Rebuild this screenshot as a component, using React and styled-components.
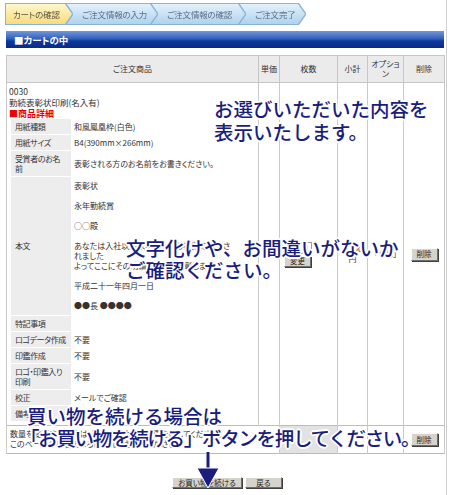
import styled, { createGlobalStyle } from "styled-components";

const GlobalStyle = createGlobalStyle`
  html, body { margin: 0; padding: 0; background: #fff; }
  body {
    font-family: "Noto Sans CJK JP", "Noto Sans", sans-serif;
    font-feature-settings: "palt";
    color: #333;
  }
`;

const Page = styled.div`
  position: relative;
  box-sizing: border-box;
  width: 447px;
  height: 495px;
  padding: 4px 2px 0 6px;
  border-right: 1px solid #d0d0d0;
  overflow: hidden;
`;

const Steps = styled.div`
  display: flex;
  height: 20px;
`;

const StepWrap = styled.div`
  position: relative;
  z-index: ${(p) => p.$z};
  margin-left: ${(p) => (p.$first ? 0 : -7)}px;
  filter: drop-shadow(1px 0 0 #8cb2d6) drop-shadow(-1px 0 0 #8cb2d6)
    drop-shadow(0 1px 0 #8cb2d6) drop-shadow(0 -1px 0 #8cb2d6);
`;

const Step = styled.div`
  box-sizing: border-box;
  width: ${(p) => p.$w}px;
  height: 20px;
  padding-left: ${(p) => (p.$first ? 7 : 17)}px;
  display: flex;
  align-items: center;
  font-size: 8.5px;
  letter-spacing: -0.2px;
  white-space: nowrap;
  color: ${(p) => (p.$active ? "#5b5442" : "#5a6f86")};
  background: ${(p) =>
    p.$active
      ? "linear-gradient(#fff7cc, #f8dc7c)"
      : "linear-gradient(#e3f1fb, #afd3ee)"};
  clip-path: polygon(0 0, calc(100% - 7px) 0, 100% 50%, calc(100% - 7px) 100%, 0 100%);
`;

const SectionBar = styled.div`
  margin-top: 7px;
  height: 17px;
  display: flex;
  align-items: center;
  padding-left: 8px;
  background: linear-gradient(#7398da, #3262bd 45%, #103899 60%, #0a2a86);
  color: #fff;
  font-size: 9.5px;
  font-weight: bold;
`;

const Cart = styled.table`
  margin-top: 7px;
  width: 438px;
  table-layout: fixed;
  border-collapse: collapse;
  border: 1px solid #b9b9b9;
  font-size: 8px;
  line-height: 10px;
`;

const Th = styled.th`
  height: 26px;
  padding: 0 1px;
  background: #ebebeb;
  font-weight: normal;
  color: #333;
  border: 1px solid #c6c6c6;
`;

const Td = styled.td`
  border-left: 1px solid #cacaca;
  border-right: 1px solid #cacaca;
  border-top: ${(p) => (p.$top ? "1px solid #bdbdbd" : "none")};
  padding: 2px;
  text-align: ${(p) => (p.$left ? "left" : "center")};
  vertical-align: ${(p) => (p.$valign ? p.$valign : "middle")};
  background: ${(p) => (p.$shade ? "#e2e2e2" : "#fff")};
`;

const ProductCell = styled(Td)`
  padding: 3px 2px 4px;
`;

const InfoLine = styled.div`
  line-height: 11px;
  color: ${(p) => (p.$red ? "#f00000" : "#333")};
  font-weight: ${(p) => (p.$red ? "bold" : "normal")};
  font-size: ${(p) => (p.$red ? "9px" : "8.5px")};
`;

const Detail = styled.div`
  display: grid;
  grid-template-columns: 60px 1fr;
  row-gap: 1px;
  margin: 0 2px;
`;

const Label = styled.div`
  background: #ededed;
  padding: 2.5px 2px 2.5px 4px;
  display: flex;
  align-items: center;
  white-space: pre-line;
  letter-spacing: -0.4px;
`;

const Value = styled.div`
  padding: ${(p) => (p.$tall ? "4px 3px" : "2.5px 3px")};
  display: flex;
  align-items: center;
`;

const Para = styled.div`
  margin-bottom: ${(p) => (p.$last ? 0 : 10)}px;
`;

const Btn = styled.button`
  box-sizing: border-box;
  height: ${(p) => (p.$h ? p.$h : 13)}px;
  min-width: ${(p) => (p.$min ? p.$min : 0)}px;
  padding: 0 5px;
  font-family: inherit;
  font-feature-settings: "palt";
  font-size: 7.5px;
  line-height: 1;
  color: #222;
  background: #d6d3cc;
  border: 1px solid;
  border-color: #fff #6f6f6f #6f6f6f #fff;
  box-shadow: 1px 1px 0 #404040;
`;

const QtyInput = styled.div`
  width: 24px;
  height: 10px;
  margin-bottom: 2px;
  border: 1px solid #999;
  font-size: 8px;
  line-height: 10px;
  text-align: right;
  padding-right: 2px;
`;

const QtyCell = styled(Td)`
  text-align: left;
  padding-left: 4px;
`;

const NoteText = styled.div`
  white-space: nowrap;
  overflow: hidden;
`;

const Actions = styled.div`
  margin-top: 23px;
  display: flex;
  justify-content: center;
  gap: 3px;
  padding-left: 4px;
`;

const Note = styled.div`
  position: absolute;
  left: ${(p) => p.$x}px;
  top: ${(p) => p.$y}px;
  font-family: "Noto Sans CJK JP", sans-serif;
  font-feature-settings: normal;
  font-size: 19.5px;
  font-weight: 500;
  line-height: ${(p) => p.$lh || 23}px;
  letter-spacing: ${(p) => p.$ls || 0}px;
  color: #1a1d7c;
  white-space: nowrap;
  text-shadow: -1px -1px 0 #fff, 1px -1px 0 #fff, -1px 1px 0 #fff,
    1px 1px 0 #fff, 0 -2px 0 #fff, 0 2px 0 #fff, -2px 0 0 #fff, 2px 0 0 #fff;
`;

const Arrow = styled.svg`
  position: absolute;
  left: 196px;
  top: 450px;
`;

const steps = [
  { t: "カートの確認", w: 66 },
  { t: "ご注文情報の入力", w: 92 },
  { t: "ご注文情報の確認", w: 95 },
  { t: "ご注文完了", w: 67 },
];

const details = [
  ["用紙種類", "和風鳳凰枠(白色)"],
  ["用紙サイズ", "B4(390mm×266mm)"],
  ["受賞者のお名\n前", "表彰される方のお名前をお書きください。"],
];

const extras = [
  ["特記事項", ""],
  ["ロゴデータ作成", "不要"],
  ["印鑑作成", "不要"],
  ["ロゴ・印鑑入り\n印刷", "不要"],
  ["校正", "メールでご確認"],
  ["備考", ""],
];

export default function App() {
  return (
    <>
      <GlobalStyle />
      <Page>
        <Steps>
          {steps.map((s, i) => (
            <StepWrap key={s.t} $z={10 - i} $first={i === 0}>
              <Step $w={s.w} $first={i === 0} $active={i === 0}>
                {s.t}
              </Step>
            </StepWrap>
          ))}
        </Steps>

        <SectionBar>■カートの中</SectionBar>

        <Cart>
          <colgroup>
            <col style={{ width: 252 }} />
            <col style={{ width: 21 }} />
            <col style={{ width: 58 }} />
            <col style={{ width: 30 }} />
            <col style={{ width: 36 }} />
            <col style={{ width: 41 }} />
          </colgroup>
          <thead>
            <tr>
              <Th>ご注文商品</Th>
              <Th>単価</Th>
              <Th>枚数</Th>
              <Th>小計</Th>
              <Th>オプション</Th>
              <Th>削除</Th>
            </tr>
          </thead>
          <tbody>
            <tr>
              <ProductCell $left $valign="top">
                <InfoLine>0030</InfoLine>
                <InfoLine>勤続表彰状印刷(名入有)</InfoLine>
                <InfoLine $red>■商品詳細</InfoLine>
                <Detail>
                  {details.map(([l, v]) => [
                    <Label key={l}>{l}</Label>,
                    <Value key={l + "v"}>
                      <div>{v}</div>
                    </Value>,
                  ])}
                  <Label>本文</Label>
                  <Value $tall>
                    <div>
                      <Para>表彰状</Para>
                      <Para>永年勤続賞</Para>
                      <Para>○○殿</Para>
                      <Para>
                        あなたは入社以来永年にわたり社業に寄与さ
                        <br />
                        れました
                        <br />
                        よってここにその功績をたたえ表彰します
                      </Para>
                      <Para>平成二十一年四月一日</Para>
                      <Para $last>●●長 ●●●●</Para>
                    </div>
                  </Value>
                  {extras.map(([l, v]) => [
                    <Label key={l}>{l}</Label>,
                    <Value key={l + "v"}>
                      <div>{v}</div>
                    </Value>,
                  ])}
                </Detail>
              </ProductCell>
              <Td></Td>
              <QtyCell>
                <QtyInput>1</QtyInput>
                <Btn $h={11}>変更</Btn>
              </QtyCell>
              <Td>
                6,300
                <br />円
              </Td>
              <Td>「なし」</Td>
              <Td>
                <Btn>削除</Btn>
              </Td>
            </tr>
            <tr>
              <Td $top $left colSpan={2} style={{ padding: "3px 3px 4px" }}>
                <NoteText>数量を変更する場合は、数値を入力して変更を押してください。</NoteText>
                <NoteText>このページの内容でよろしければお進みください。</NoteText>
              </Td>
              <Td $top $shade></Td>
              <Td $top></Td>
              <Td $top></Td>
              <Td $top>
                <Btn>削除</Btn>
              </Td>
            </tr>
          </tbody>
        </Cart>

        <Actions>
          <Btn $h={11}>お買い物を続ける</Btn>
          <Btn $h={11} $min={37}>戻る</Btn>
        </Actions>

        <Note $x={214} $y={97}>
          お選びいただいた内容を
          <br />
          表示いたします。
        </Note>
        <Note $x={126} $y={237} $lh={22}>
          文字化けや、お間違いがないか
          <br />
          ご確認ください。
        </Note>
        <Note $x={27} $y={404}>
          買い物を続ける場合は
        </Note>
        <Note $x={20} $y={426} $ls={-1.3}>
          「お買い物を続ける」ボタンを押してください。
        </Note>

        <Arrow width="24" height="40" viewBox="0 0 24 40">
          <rect x="10" y="1" width="4" height="19" fill="#fff" />
          <rect x="10.5" y="2" width="3" height="18" fill="#1a1d7c" />
          <polygon points="1,18 23,18 12,38" fill="#1a1d7c" stroke="#fff" strokeWidth="1" />
        </Arrow>
      </Page>
    </>
  );
}
